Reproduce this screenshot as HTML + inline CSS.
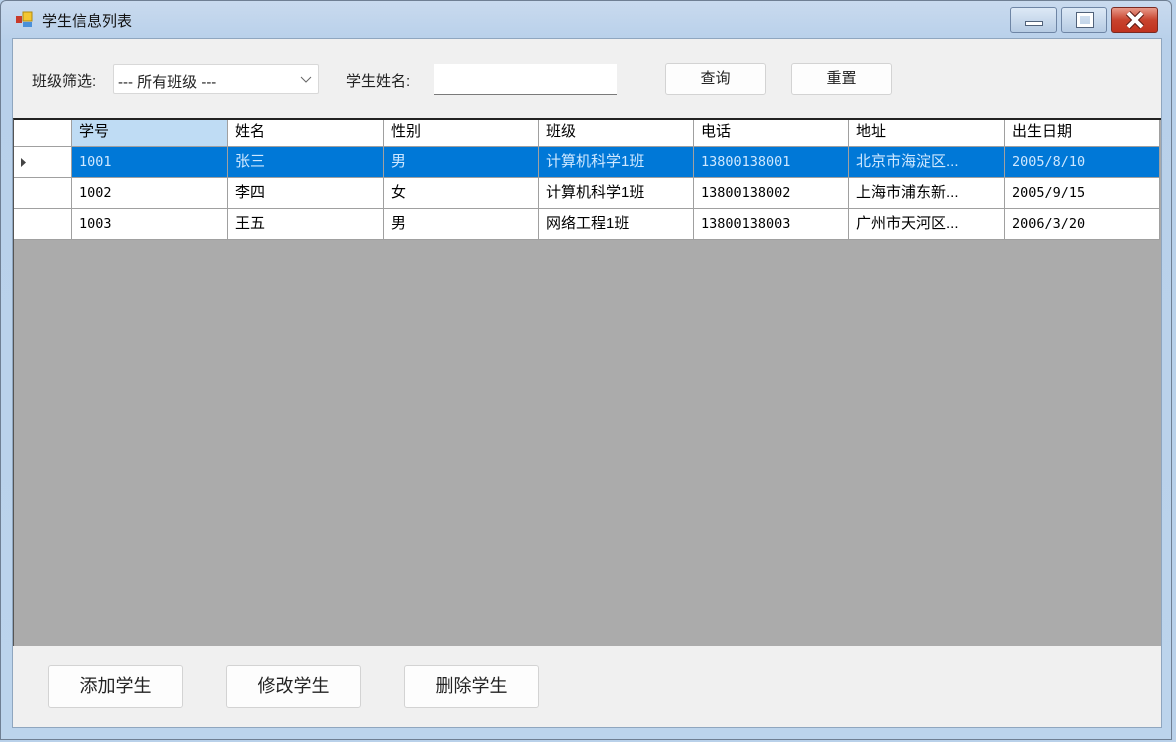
<!DOCTYPE html>
<html><head><meta charset="utf-8"><style>
*{box-sizing:border-box;margin:0;padding:0}
body{width:1176px;height:742px;overflow:hidden;background:#b9d1ea;font-family:"Liberation Sans","Noto Sans CJK SC",sans-serif;position:relative;font-size:15px;color:#000}
.frame{position:absolute;left:0;top:0;width:1172px;height:740px;background:linear-gradient(#c9daee,#b8d0ea 40px,#bcd4ec);border:1px solid #6f7f93;border-radius:6px 6px 0 0}
.title{position:absolute;left:42px;top:10px;font-size:15px;color:#111}
.client{position:absolute;left:12px;top:38px;width:1150px;height:690px;background:#f0f0f0;border:1px solid #8fa6bf}
.abs{position:absolute}
.lbl{font-size:15px;color:#222}
.btn{position:absolute;background:#fdfdfd;border:1px solid #d3d3d3;border-radius:3px;text-align:center;color:#222}
.grid{position:absolute;left:13px;top:118px;width:1148px;height:528px;background:#ababab;border-top:2px solid #222;border-left:1px solid #555}
.row{position:absolute;left:0;height:31px;width:1146px;background:#fff}
.c{position:absolute;top:0;height:100%;border-right:1px solid #a0a0a0;border-bottom:1px solid #a0a0a0;padding-left:7px;line-height:30px;font-size:15px;white-space:nowrap;overflow:hidden}
.num{font-family:"DejaVu Sans Mono","Liberation Mono",monospace;font-size:13.5px}
.sel .c{background:#0078d7;color:#cfe8ff}
.sel .c.rh{background:#fff}
.wb{position:absolute;top:7px;height:26px;border:1px solid #6e85a5;border-radius:3px;background:linear-gradient(#dde9f6,#b6cbe3)}
</style></head><body>
<div class="frame"></div>
<svg class="abs" style="left:16px;top:11px" width="20" height="18"><rect x="0" y="5" width="6" height="7" fill="#c83a2a"/><rect x="7" y="1" width="9" height="9" fill="#f3c631" stroke="#b08a10"/><rect x="7" y="11" width="9" height="5" fill="#4a90d9"/></svg>
<div class="title">学生信息列表</div>
<div class="wb" style="left:1010px;width:47px"><div class="abs" style="left:14px;top:13px;width:18px;height:5px;background:#fff;border:1px solid #51627a"></div></div>
<div class="wb" style="left:1061px;width:46px"><div class="abs" style="left:15px;top:5px;width:16px;height:14px;border:3px solid #fff;outline:1px solid #51627a"></div></div>
<div class="wb" style="left:1111px;width:47px;background:linear-gradient(#e89a8a,#c8432e 50%,#c0321e);border-color:#7a2a22"><svg class="abs" style="left:13px;top:3px" width="20" height="18"><path d="M3 2 L17 16 M17 2 L3 16" stroke="#5a1a14" stroke-width="6"/><path d="M3 2 L17 16 M17 2 L3 16" stroke="#fff" stroke-width="4"/></svg></div>
<div class="client"></div>
<div class="abs lbl" style="left:32px;top:70px">班级筛选:</div>
<div class="abs" style="left:113px;top:64px;width:206px;height:30px;background:#fff;border:1px solid #d8d8d8;border-radius:2px"><span class="abs lbl" style="left:4px;top:6px">--- 所有班级 ---</span><svg class="abs" style="left:186px;top:11px" width="12" height="8"><path d="M1 1 L6 6 L11 1" stroke="#666" fill="none"/></svg></div>
<div class="abs lbl" style="left:346px;top:70px">学生姓名:</div>
<div class="abs" style="left:434px;top:64px;width:183px;height:31px;background:#fff;border-bottom:1px solid #7a7a7a"></div>
<div class="btn" style="left:665px;top:63px;width:101px;height:32px;line-height:30px">查询</div>
<div class="btn" style="left:791px;top:63px;width:101px;height:32px;line-height:30px">重置</div>
<div class="grid">
 <div class="row" style="top:0;height:27px">
  <div class="c" style="left:0;width:58px"></div>
  <div class="c" style="left:58px;width:156px;background:#bfdcf4;line-height:24px">学号</div>
  <div class="c" style="left:214px;width:156px;line-height:24px">姓名</div>
  <div class="c" style="left:370px;width:155px;line-height:24px">性别</div>
  <div class="c" style="left:525px;width:155px;line-height:24px">班级</div>
  <div class="c" style="left:680px;width:155px;line-height:24px">电话</div>
  <div class="c" style="left:835px;width:156px;line-height:24px">地址</div>
  <div class="c" style="left:991px;width:155px;line-height:24px">出生日期</div>
 </div>
 <div class="row sel" style="top:27px">
  <div class="c rh" style="left:0;width:58px"><svg class="abs" style="left:7px;top:11px" width="6" height="9"><path d="M0 0 L5 4.5 L0 9Z" fill="#444"/></svg></div>
  <div class="c num" style="left:58px;width:156px">1001</div>
  <div class="c" style="left:214px;width:156px">张三</div>
  <div class="c" style="left:370px;width:155px">男</div>
  <div class="c" style="left:525px;width:155px">计算机科学1班</div>
  <div class="c num" style="left:680px;width:155px">13800138001</div>
  <div class="c" style="left:835px;width:156px">北京市海淀区...</div>
  <div class="c num" style="left:991px;width:155px">2005/8/10</div>
 </div>
 <div class="row" style="top:58px">
  <div class="c" style="left:0;width:58px"></div>
  <div class="c num" style="left:58px;width:156px">1002</div>
  <div class="c" style="left:214px;width:156px">李四</div>
  <div class="c" style="left:370px;width:155px">女</div>
  <div class="c" style="left:525px;width:155px">计算机科学1班</div>
  <div class="c num" style="left:680px;width:155px">13800138002</div>
  <div class="c" style="left:835px;width:156px">上海市浦东新...</div>
  <div class="c num" style="left:991px;width:155px">2005/9/15</div>
 </div>
 <div class="row" style="top:89px">
  <div class="c" style="left:0;width:58px"></div>
  <div class="c num" style="left:58px;width:156px">1003</div>
  <div class="c" style="left:214px;width:156px">王五</div>
  <div class="c" style="left:370px;width:155px">男</div>
  <div class="c" style="left:525px;width:155px">网络工程1班</div>
  <div class="c num" style="left:680px;width:155px">13800138003</div>
  <div class="c" style="left:835px;width:156px">广州市天河区...</div>
  <div class="c num" style="left:991px;width:155px">2006/3/20</div>
 </div>
</div>
<div class="btn" style="left:48px;top:665px;width:135px;height:43px;line-height:41px;font-size:18px">添加学生</div>
<div class="btn" style="left:226px;top:665px;width:135px;height:43px;line-height:41px;font-size:18px">修改学生</div>
<div class="btn" style="left:404px;top:665px;width:135px;height:43px;line-height:41px;font-size:18px">删除学生</div>
</body></html>
